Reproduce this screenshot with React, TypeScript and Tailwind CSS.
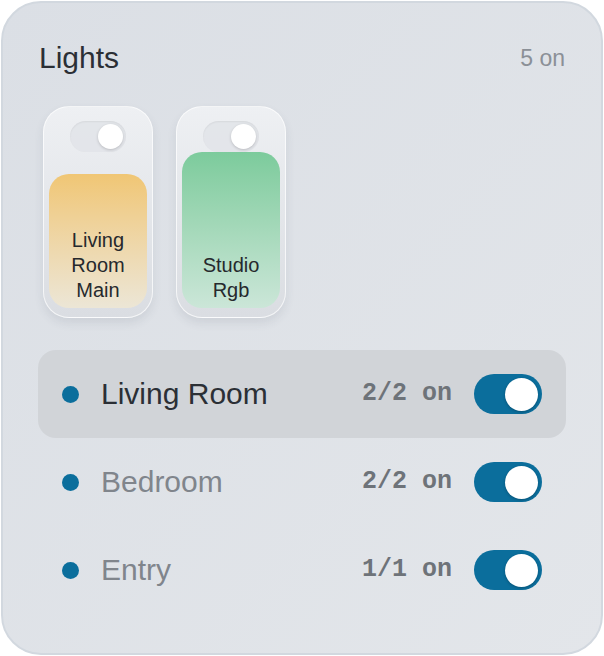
import React from 'react';

interface Tile {
  name: string[];
  height: number;
  color: string;
}

interface Room {
  name: string;
  count: string;
  active?: boolean;
}

const TILES: Tile[] = [
  { name: ['Living', 'Room', 'Main'], height: 134, color: 'from-[#f0c674] to-[#ece6d6]' },
  { name: ['Studio', 'Rgb'], height: 156, color: 'from-[#7ccb9c] to-[#cbe6d8]' },
];

const ROOMS: Room[] = [
  { name: 'Living Room', count: '2/2 on', active: true },
  { name: 'Bedroom', count: '2/2 on' },
  { name: 'Entry', count: '1/1 on' },
];

function TileSwitch() {
  return (
    <div className="absolute top-[14px] left-1/2 -translate-x-1/2 z-10 w-[56px] h-[31px] rounded-full bg-[#e3e5e9]/95 shadow-[inset_0_1px_2px_rgba(0,0,0,0.06)] flex items-center justify-end pr-[3px]">
      <div className="w-[25px] h-[25px] rounded-full bg-white shadow-[0_1px_3px_rgba(0,0,0,0.18)]" />
    </div>
  );
}

function LightTile({ tile }: { tile: Tile }) {
  return (
    <div className="relative w-[110px] h-[212px] rounded-[26px] bg-linear-to-b from-[#eef0f3] to-[#dadde2] border border-white/70 shadow-[0_5px_10px_rgba(60,70,90,0.10)] flex flex-col justify-end px-[5px] pb-[9px]">
      <TileSwitch />
      <div
        className={`rounded-[20px] bg-linear-to-b ${tile.color} flex flex-col justify-end items-center pb-[5px]`}
        style={{ height: tile.height }}
      >
        {tile.name.map((line) => (
          <span key={line} className="text-[20px] leading-[25px] text-[#26292d]">
            {line}
          </span>
        ))}
      </div>
    </div>
  );
}

function Toggle() {
  return (
    <div className="w-[68px] h-[40px] rounded-full bg-[#0b6e9c] flex items-center justify-end pr-[4px]">
      <div className="w-[33px] h-[33px] rounded-full bg-white shadow-[0_1px_3px_rgba(0,0,0,0.25)]" />
    </div>
  );
}

export default function App() {
  return (
    <div className="min-h-screen bg-white p-px" style={{ fontFamily: '"Liberation Sans", Arial, sans-serif' }}>
      <div className="w-[602px] h-[654px] rounded-[40px] border-2 border-[#d2d8df] bg-linear-to-br from-[#dbdfe5] to-[#e3e6ea] px-[35px] pt-[40px]">
        {/* Header */}
        <div className="flex items-center justify-between pl-px pr-px">
          <h1 className="text-[30px] leading-[30px] text-[#2b2f35]">Lights</h1>
          <span className="text-[23px] leading-[30px] text-[#8b9097]">5 on</span>
        </div>

        {/* Tiles */}
        <div className="flex gap-[23px] pl-[5px] mt-[33px]">
          {TILES.map((t) => (
            <LightTile key={t.name.join(' ')} tile={t} />
          ))}
        </div>

        {/* Rooms */}
        <div className="flex flex-col mt-[32px]">
          {ROOMS.map((r) => (
            <div
              key={r.name}
              className={`h-[88px] rounded-[18px] flex items-center pl-[24px] pr-[24px] ${r.active ? 'bg-[#d1d4d8]' : ''}`}
            >
              <div className="w-[17px] h-[17px] rounded-full bg-[#0b6e9c]" />
              <span className={`ml-[22px] text-[30px] leading-[30px] ${r.active ? 'text-[#2b2f35]' : 'text-[#80858c]'}`}>
                {r.name}
              </span>
              <span
                className="ml-auto mr-[22px] text-[25px] font-bold text-[#6e7379]"
                style={{ fontFamily: '"Liberation Mono", monospace' }}
              >
                {r.count}
              </span>
              <Toggle />
            </div>
          ))}
        </div>
      </div>
    </div>
  );
}
